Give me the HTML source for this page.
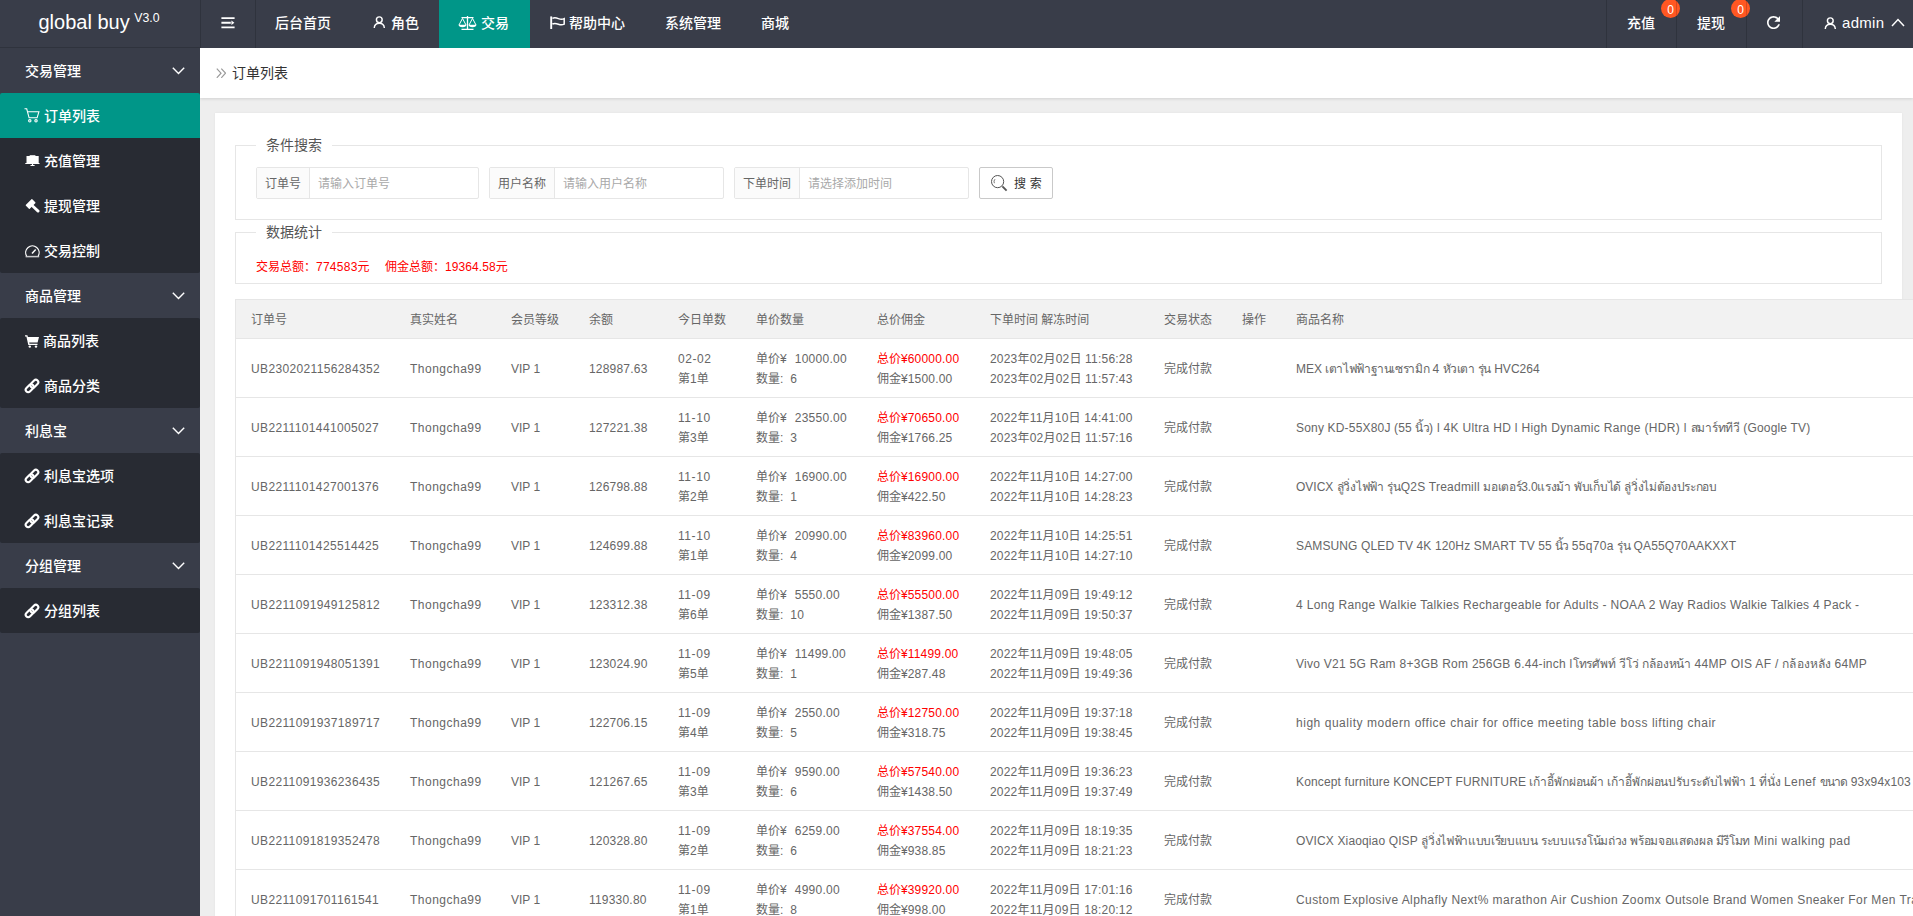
<!DOCTYPE html>
<html lang="zh-CN">
<head>
<meta charset="utf-8">
<title>global buy</title>
<style>
*{box-sizing:border-box;margin:0;padding:0}
html,body{width:1913px;height:916px;overflow:hidden}
body{font-family:"Liberation Sans","Noto Sans CJK SC",sans-serif;font-size:14px;color:#333;background:#eee;position:relative}
svg{display:block}
/* header */
.hd{position:absolute;left:0;top:0;width:1913px;height:48px;background:#393d49;color:#fff;font-weight:500;z-index:3}
.logo{position:absolute;left:0;top:0;width:200px;height:48px;border-bottom:1px solid rgba(0,0,0,.16);line-height:44px;padding-right:2px;text-align:center;font-size:20px;color:#fff;letter-spacing:0}
.logo sup{font-size:12.3px;letter-spacing:0;font-weight:normal;position:relative;top:-7px;vertical-align:baseline;margin-left:-1px}
.nav{position:absolute;top:0;height:48px;line-height:46px;font-size:14px;color:#fff;white-space:nowrap}
.nav.on{background:#009688}
.nav .ic{position:absolute}
.vline{position:absolute;top:0;width:1px;height:48px;background:rgba(0,0,0,.16)}
.badge{position:absolute;top:-1px;width:19px;height:19px;border-radius:10px;background:#ff5722;color:#fff;font-size:12px;line-height:22px;text-align:center}
/* side */
.side{position:absolute;left:0;top:48px;width:200px;height:868px;background:#393d49;font-weight:500;z-index:2}
.si{position:absolute;left:0;width:200px;height:45px;line-height:47px;color:#fff;font-size:14px;white-space:nowrap}
.si.p{padding-left:25px;background:#393d49}
.si.c{background:#282b33}
.si.on{background:#009688}
.si .tx{position:absolute;left:44px;top:0}
.si .ic{position:absolute;left:25px}
.si .chev{position:absolute;left:172px;top:19px}
/* body */
.crumb{position:absolute;left:200px;top:48px;width:1713px;height:50px;background:#fff;box-shadow:0 1px 3px rgba(0,0,0,.12);line-height:50px;font-size:14px;color:#333}
.crumb .tx{position:absolute;left:32px;top:0}
.card{position:absolute;left:215px;top:113px;width:1687px;height:820px;background:#fff;box-shadow:0 0 2px rgba(0,0,0,.06)}
.fs{position:absolute;border:1px solid #e6e6e6;left:235px;width:1647px}
.lg{position:absolute;left:20px;top:-11px;height:20px;line-height:20px;background:#fff;padding:0 10px;font-size:14px;color:#555}
.grp{position:absolute;top:167px;height:32px;border:1px solid #e6e6e6;border-radius:2px;background:#fff;font-size:12px;line-height:32px}
.grp .lb{position:absolute;left:0;top:0;height:30px;background:#fbfbfb;border-right:1px solid #e6e6e6;text-align:left;padding-left:8px;color:#666}
.grp .ph{position:absolute;top:0;color:#a9a9a9}
.btn{position:absolute;left:979px;top:167px;width:74px;height:32px;border:1px solid #c9c9c9;border-radius:2px;background:#fff;font-size:12px;line-height:32px;color:#333}
.stat{position:absolute;left:256px;top:257px;font-size:12px;line-height:20px;color:#f00;white-space:pre}
/* table */
table{position:absolute;left:235px;top:299px;border-collapse:separate;border-spacing:0;table-layout:fixed;width:1800px;background:#fff;font-size:12px;color:#666;line-height:20px;border-left:1px solid #e6e6e6;border-top:1px solid #e6e6e6}
th,td{padding:10px 15px 8px;text-align:left;font-weight:normal;border-bottom:1px solid #e6e6e6;white-space:nowrap;overflow:hidden;vertical-align:middle}
th{background:#f2f2f2;height:39px}
td{height:59px}
.red{color:#f00}
.sg{display:inline-block;white-space:pre;vertical-align:top}
.l1{letter-spacing:.36px}.l2{letter-spacing:.49px}.l3{letter-spacing:0}.l4{letter-spacing:.2px}.l5{letter-spacing:.57px}
.l6{letter-spacing:.27px;margin-left:8px}.l7{letter-spacing:.27px;margin-left:7px}.l8{letter-spacing:.2px}.l9{letter-spacing:.2px}
</style>
</head>
<body>
<!-- ================= header ================= -->
<div class="hd">
  <div class="logo">global buy <sup>V3.0</sup></div>
  <div class="vline" style="left:200px"></div>
  <div class="vline" style="left:255px"></div>
  <div class="nav" style="left:200px;width:55px">
    <svg class="ic" style="left:21px;top:16px" width="14" height="14" viewBox="0 0 14 14" fill="#fff"><path d="M0.4 1.2h13.2v1.9H0.4zM0.4 5.8h9.400v1.900H0.4zM0.4 10.4h13.2v1.900H0.4zM10.400 4.500l3 2.250-3 2.250z"/></svg>
  </div>
  <div class="nav" style="left:275px">后台首页</div>
  <div class="nav" style="left:352px;width:87px">
    <svg class="ic" style="left:21px;top:16.300px" width="12.600" height="12.600" viewBox="0 0 14 14" fill="none" stroke="#fff" stroke-width="1.600"><circle cx="7" cy="4.200" r="3.200"/><path d="M1.4 13.4c.2-3.6 2.6-5.4 5.6-5.4s5.4 1.8 5.6 5.4"/></svg>
    <span style="position:absolute;left:39px">角色</span>
  </div>
  <div class="nav on" style="left:439px;width:91px">
    <svg class="ic" style="left:19px;top:16px" width="19" height="15" viewBox="0 0 19 15" fill="none" stroke="#fff" stroke-width="1.2"><path d="M9.5 0v13M3.5 13.4h12M3.5 1.6h12" stroke-width="1.3"/><path d="M1 9l3.5-6.6L8 9M11 9l3.5-6.6L18 9" stroke-width="1"/><path d="M0.6 8.8h7.8a3.9 2.4 0 0 1-7.8 0zM10.6 8.8h7.8a3.9 2.4 0 0 1-7.8 0z" fill="#fff" stroke="none"/></svg>
    <span style="position:absolute;left:42px">交易</span>
  </div>
  <div class="nav" style="left:530px;width:115px">
    <svg class="ic" style="left:20px;top:16px" width="16" height="14" viewBox="0 0 16 14" fill="none" stroke="#fff" stroke-width="1.5"><path d="M1.2 0.4v12.6" stroke-width="1.9"/><path d="M2.4 2.4c2.2-1.2 4 -0.6 6 0.2s3.800 1 5.800 0v5.600c-2 1-3.800 0.800-5.800 0s-3.800-1.400-6-0.200"/></svg>
    <span style="position:absolute;left:39px">帮助中心</span>
  </div>
  <div class="nav" style="left:665px">系统管理</div>
  <div class="nav" style="left:761px">商城</div>

  <div class="nav" style="left:1627px">充值</div>
  <div class="badge" style="left:1661px">0</div>
  <div class="nav" style="left:1697px">提现</div>
  <div class="badge" style="left:1731px">0</div>
  <div class="vline" style="left:1606px"></div>
  <div class="vline" style="left:1676px"></div>
  <div class="vline" style="left:1746px"></div>
  <div class="vline" style="left:1802px"></div>
  <div class="nav" style="left:1746px;width:56px">
    <svg class="ic" style="left:21.2px;top:16.1px" width="13.1" height="13.1" viewBox="4 4 16 16" fill="#fff"><path d="M17.65 6.35C16.2 4.900 14.210 4 12 4c-4.420 0-7.990 3.580-7.990 8s3.570 8 7.990 8c3.730 0 6.840-2.550 7.730-6h-2.080c-.820 2.330-3.040 4-5.650 4-3.310 0-6-2.690-6-6s2.690-6 6-6c1.660 0 3.140.690 4.220 1.780L13 11h7V4l-2.350 2.350z"/></svg>
  </div>
  <div class="nav" style="left:1802px;width:111px">
    <svg class="ic" style="left:21.500px;top:16.600px" width="12.600" height="12.600" viewBox="0 0 14 14" fill="none" stroke="#fff" stroke-width="1.6"><circle cx="7" cy="4.2" r="3.2"/><path d="M1.4 13.4c.2-3.6 2.6-5.4 5.6-5.4s5.4 1.8 5.6 5.4"/></svg>
    <span style="position:absolute;left:40px;font-size:15px;letter-spacing:.3px">admin</span>
    <svg class="ic" style="left:89px;top:18px" width="14" height="9" viewBox="0 0 14 9" fill="none" stroke="#fff" stroke-width="1.5"><path d="M1 8l6-6.4L13 8"/></svg>
  </div>
</div>

<!-- ================= sidebar ================= -->
<div class="side">
  <div class="si p" style="top:0">交易管理<svg class="chev" width="13" height="8" viewBox="0 0 13 8" fill="none" stroke="#fff" stroke-width="1.4"><path d="M0.8 0.8l5.7 5.8 5.7-5.8"/></svg></div>
  <div class="si c on" style="top:45px;border-radius:2px 2px 0 0">
    <svg class="ic" style="top:15px;left:24px" width="16" height="15" viewBox="0 0 16 15" fill="none" stroke="#fff" stroke-width="1.1"><path d="M0.5 0.8h2.2l2.4 9h8l1.8-6H4"/><circle cx="5.8" cy="12.8" r="1.2"/><circle cx="12" cy="12.8" r="1.2"/></svg>
    <span class="tx">订单列表</span></div>
  <div class="si c" style="top:90px">
    <svg class="ic" style="left:24.5px;top:17px" width="15" height="12" viewBox="0 0 15 12" fill="#fff"><path d="M4.700 0h5.700v1H4.700z" opacity=".8"/><path d="M1.500 0.900h12.200v7.700H1.500zM0.300 8h14.200v.900H0.300zM6.900 8.900h1.200v1.100H6.900zM5.500 10h4.100v1.100H5.500z"/></svg>
    <span class="tx">充值管理</span></div>
  <div class="si c" style="top:135px">
    <svg class="ic" style="left:24.700px;top:16.100px" width="15" height="15" viewBox="0 0 15 15" fill="#fff"><g transform="rotate(-45 5.600 5)"><rect x="1.100" y="2.300" width="9" height="5.400" rx=".600"/></g><path d="M7.400 6.800l5.700 5.300" fill="none" stroke="#fff" stroke-width="2.800" stroke-linecap="round"/></svg>
    <span class="tx">提现管理</span></div>
  <div class="si c" style="top:180px;border-radius:0 0 2px 2px">
    <svg class="ic" style="left:24.900px;top:16.700px" width="15" height="13" viewBox="0 0 15 13" fill="none" stroke="#fff" stroke-width="1.200"><path d="M0.600 11.600h13.600" stroke-width="1.500" opacity=".75"/><path d="M1.630 11A6.700 6.700 0 1 1 13.170 11"/><path d="M7 8.400l3.700-4" stroke-width="1.500"/></svg>
    <span class="tx">交易控制</span></div>
  <div class="si p" style="top:225px">商品管理<svg class="chev" width="13" height="8" viewBox="0 0 13 8" fill="none" stroke="#fff" stroke-width="1.4"><path d="M0.8 0.8l5.7 5.8 5.7-5.8"/></svg></div>
  <div class="si c" style="top:270px;border-radius:2px 2px 0 0">
    <svg class="ic" style="top:17px" width="14" height="13" viewBox="0 0 14 13" fill="#fff"><path d="M0 0.3h2.4l0.5 1.7H14l-1.4 5.4H4.2l0.3 1.3h8v1.3H3.3L1.4 1.6H0z"/><circle cx="4.8" cy="11.6" r="1.2"/><circle cx="11" cy="11.6" r="1.2"/></svg>
    <span class="tx" style="left:43px">商品列表</span></div>
  <div class="si c" style="top:315px;border-radius:0 0 2px 2px">
    <svg class="ic lk" style="left:24px;top:15px" width="16" height="16" viewBox="0 0 16 16" fill="none" stroke="#fff" stroke-width="2.1"><g transform="rotate(-45 8 8)"><rect x="0.150" y="5.550" width="9.100" height="4.900" rx="2.450"/><rect x="6.750" y="5.550" width="9.100" height="4.900" rx="2.450"/></g></svg>
    <span class="tx">商品分类</span></div>
  <div class="si p" style="top:360px">利息宝<svg class="chev" width="13" height="8" viewBox="0 0 13 8" fill="none" stroke="#fff" stroke-width="1.4"><path d="M0.8 0.8l5.7 5.8 5.7-5.8"/></svg></div>
  <div class="si c" style="top:405px;border-radius:2px 2px 0 0">
    <svg class="ic lk" style="left:24px;top:15px" width="16" height="16" viewBox="0 0 16 16" fill="none" stroke="#fff" stroke-width="2.1"><g transform="rotate(-45 8 8)"><rect x="0.150" y="5.550" width="9.100" height="4.900" rx="2.450"/><rect x="6.750" y="5.550" width="9.100" height="4.900" rx="2.450"/></g></svg>
    <span class="tx">利息宝选项</span></div>
  <div class="si c" style="top:450px;border-radius:0 0 2px 2px">
    <svg class="ic lk" style="left:24px;top:15px" width="16" height="16" viewBox="0 0 16 16" fill="none" stroke="#fff" stroke-width="2.1"><g transform="rotate(-45 8 8)"><rect x="0.150" y="5.550" width="9.100" height="4.900" rx="2.450"/><rect x="6.750" y="5.550" width="9.100" height="4.900" rx="2.450"/></g></svg>
    <span class="tx">利息宝记录</span></div>
  <div class="si p" style="top:495px">分组管理<svg class="chev" width="13" height="8" viewBox="0 0 13 8" fill="none" stroke="#fff" stroke-width="1.4"><path d="M0.8 0.8l5.7 5.8 5.7-5.8"/></svg></div>
  <div class="si c" style="top:540px;border-radius:2px">
    <svg class="ic lk" style="left:24px;top:15px" width="16" height="16" viewBox="0 0 16 16" fill="none" stroke="#fff" stroke-width="2.1"><g transform="rotate(-45 8 8)"><rect x="0.150" y="5.550" width="9.100" height="4.900" rx="2.450"/><rect x="6.750" y="5.550" width="9.100" height="4.900" rx="2.450"/></g></svg>
    <span class="tx">分组列表</span></div>
</div>

<!-- ================= content ================= -->
<div class="crumb">
  <svg style="position:absolute;left:16px;top:20px" width="10" height="10" viewBox="0 0 10 10" fill="none" stroke="#999" stroke-width="1.2"><path d="M0.8 0.6l4.2 4.6-4.2 4.600M5.300 0.600l4.200 4.600-4.200 4.600"/></svg>
  <span class="tx">订单列表</span>
</div>
<div class="card"></div>

<div class="fs" style="top:145px;height:75px"><div class="lg">条件搜索</div></div>
<div class="grp" style="left:256px;width:223px"><div class="lb" style="width:53px">订单号</div><div class="ph" style="left:61px">请输入订单号</div></div>
<div class="grp" style="left:489px;width:235px"><div class="lb" style="width:65px">用户名称</div><div class="ph" style="left:73px">请输入用户名称</div></div>
<div class="grp" style="left:734px;width:235px"><div class="lb" style="width:65px">下单时间</div><div class="ph" style="left:73px">请选择添加时间</div></div>
<div class="btn">
  <svg style="position:absolute;left:11px;top:7px" width="17" height="17" viewBox="0 0 17 17" fill="none" stroke="#555" stroke-width="1"><circle cx="6.6" cy="6.6" r="6.1"/><path d="M3.400 8.200a3.400 3.400 0 0 1 0.600-4" stroke-width=".8"/><path d="M11.400 11.400l4.200 4.200" stroke-width="1.900"/></svg>
  <span style="position:absolute;left:34px;top:0;letter-spacing:3.8px">搜索</span>
</div>

<div class="fs" style="top:232px;height:52px"><div class="lg">数据统计</div></div>
<div class="stat">交易总额：<span style="letter-spacing:.25px">774583</span>元</div><div class="stat" style="left:385px">佣金总额：<span style="letter-spacing:.08px">19364.58</span>元</div>

<table>
<colgroup><col style="width:159px"><col style="width:101px"><col style="width:78px"><col style="width:89px"><col style="width:78px"><col style="width:121px"><col style="width:113px"><col style="width:174px"><col style="width:78px"><col style="width:54px"><col></colgroup>
<thead><tr><th>订单号</th><th>真实姓名</th><th>会员等级</th><th>余额</th><th>今日单数</th><th>单价数量</th><th>总价佣金</th><th>下单时间 解冻时间</th><th>交易状态</th><th>操作</th><th>商品名称</th></tr></thead>
<tbody>
<tr><td class="l1">UB2302021156284352</td><td class="l2">Thongcha99</td><td class="l3">VIP 1</td><td class="l4">128987.63</td><td><span class="l5">02-02</span><br>第1单</td><td>单价¥<span class="l6">10000.00</span><br>数量:<span class="l7">6</span></td><td><span class="red">总价¥<span class="l8">60000.00</span></span><br>佣金¥<span class="l8">1500.00</span></td><td class="l9">2023年02月02日 11:56:28<br>2023年02月02日 11:57:43</td><td>完成付款</td><td></td><td class="nm"><span class="sg" style="width:29.2px;letter-spacing:-0.04px">MEX </span><span class="sg" style="width:107.4px;letter-spacing:-0.37px;word-spacing:0.37px">เตาไฟฟ้าฐานเซรามิก </span><span class="sg" style="width:10.4px;letter-spacing:0.19px">4 </span><span class="sg" style="width:51.2px;letter-spacing:-0.50px;word-spacing:0.50px">หัวเตา รุ่น </span><span class="sg" style="width:45.6px;letter-spacing:0.04px">HVC264</span></td></tr>
<tr><td class="l1">UB2211101441005027</td><td class="l2">Thongcha99</td><td class="l3">VIP 1</td><td class="l4">127221.38</td><td><span class="l5">11-10</span><br>第3单</td><td>单价¥<span class="l6">23550.00</span><br>数量:<span class="l7">3</span></td><td><span class="red">总价¥<span class="l8">70650.00</span></span><br>佣金¥<span class="l8">1766.25</span></td><td class="l9">2022年11月10日 14:41:00<br>2023年02月02日 11:57:16</td><td>完成付款</td><td></td><td class="nm"><span class="sg" style="width:119.4px;letter-spacing:0.18px">Sony KD-55X80J (55 </span><span class="sg" style="width:13.5px;letter-spacing:-0.75px">นิ้ว</span><span class="sg" style="width:261.7px;letter-spacing:0.33px">) l 4K Ultra HD l High Dynamic Range (HDR) l </span><span class="sg" style="width:52.7px;letter-spacing:-0.23px;word-spacing:0.23px">สมาร์ททีวี </span><span class="sg" style="width:67.1px;letter-spacing:0.18px">(Google TV)</span></td></tr>
<tr><td class="l1">UB2211101427001376</td><td class="l2">Thongcha99</td><td class="l3">VIP 1</td><td class="l4">126798.88</td><td><span class="l5">11-10</span><br>第2单</td><td>单价¥<span class="l6">16900.00</span><br>数量:<span class="l7">1</span></td><td><span class="red">总价¥<span class="l8">16900.00</span></span><br>佣金¥<span class="l8">422.50</span></td><td class="l9">2022年11月10日 14:27:00<br>2022年11月10日 14:28:23</td><td>完成付款</td><td></td><td class="nm"><span class="sg" style="width:40.6px;letter-spacing:-0.01px">OVICX </span><span class="sg" style="width:64.1px;letter-spacing:-0.25px;word-spacing:0.25px">ลู่วิ่งไฟฟ้า รุ่น</span><span class="sg" style="width:82.7px;letter-spacing:0.24px">Q2S Treadmill </span><span class="sg" style="width:37.8px;letter-spacing:-0.37px">มอเตอร์</span><span class="sg" style="width:16.3px;letter-spacing:-0.13px">3.0</span><span class="sg" style="width:179.1px;letter-spacing:-0.33px;word-spacing:0.33px">แรงม้า พับเก็บได้ ลู่วิ่งไม่ต้องประกอบ</span></td></tr>
<tr><td class="l1">UB2211101425514425</td><td class="l2">Thongcha99</td><td class="l3">VIP 1</td><td class="l4">124699.88</td><td><span class="l5">11-10</span><br>第1单</td><td>单价¥<span class="l6">20990.00</span><br>数量:<span class="l7">4</span></td><td><span class="red">总价¥<span class="l8">83960.00</span></span><br>佣金¥<span class="l8">2099.00</span></td><td class="l9">2022年11月10日 14:25:51<br>2022年11月10日 14:27:10</td><td>完成付款</td><td></td><td class="nm"><span class="sg" style="width:259.4px;letter-spacing:0.13px">SAMSUNG QLED TV 4K 120Hz SMART TV 55 </span><span class="sg" style="width:16.3px;letter-spacing:-1.02px;word-spacing:1.02px">นิ้ว </span><span class="sg" style="width:45.6px;letter-spacing:0.32px">55q70a </span><span class="sg" style="width:16.3px;letter-spacing:-0.52px;word-spacing:0.52px">รุ่น </span><span class="sg" style="width:102.6px;letter-spacing:0.14px">QA55Q70AAKXXT</span></td></tr>
<tr><td class="l1">UB2211091949125812</td><td class="l2">Thongcha99</td><td class="l3">VIP 1</td><td class="l4">123312.38</td><td><span class="l5">11-09</span><br>第6单</td><td>单价¥<span class="l6">5550.00</span><br>数量:<span class="l7">10</span></td><td><span class="red">总价¥<span class="l8">55500.00</span></span><br>佣金¥<span class="l8">1387.50</span></td><td class="l9">2022年11月09日 19:49:12<br>2022年11月09日 19:50:37</td><td>完成付款</td><td></td><td class="nm"><span class="sg" style="width:306.6px;letter-spacing:0.34px">4 Long Range Walkie Talkies Rechargeable for Adults </span><span class="sg" style="width:256.7px;letter-spacing:0.29px">- NOAA 2 Way Radios Walkie Talkies 4 Pack -</span></td></tr>
<tr><td class="l1">UB2211091948051391</td><td class="l2">Thongcha99</td><td class="l3">VIP 1</td><td class="l4">123024.90</td><td><span class="l5">11-09</span><br>第5单</td><td>单价¥<span class="l6">11499.00</span><br>数量:<span class="l7">1</span></td><td><span class="red">总价¥<span class="l8">11499.00</span></span><br>佣金¥<span class="l8">287.48</span></td><td class="l9">2022年11月09日 19:48:05<br>2022年11月09日 19:49:36</td><td>完成付款</td><td></td><td class="nm"><span class="sg" style="width:276.7px;letter-spacing:0.27px">Vivo V21 5G Ram 8+3GB Rom 256GB 6.44-inch l</span><span class="sg" style="width:121.8px;letter-spacing:-0.14px;word-spacing:0.14px">โทรศัพท์ วีโว่ กล้องหน้า </span><span class="sg" style="width:87.9px;letter-spacing:0.34px">44MP OIS AF / </span><span class="sg" style="width:52.1px;letter-spacing:0.09px">กล้องหลัง </span><span class="sg" style="width:32.6px;letter-spacing:0.31px">64MP</span></td></tr>
<tr><td class="l1">UB2211091937189717</td><td class="l2">Thongcha99</td><td class="l3">VIP 1</td><td class="l4">122706.15</td><td><span class="l5">11-09</span><br>第4单</td><td>单价¥<span class="l6">2550.00</span><br>数量:<span class="l7">5</span></td><td><span class="red">总价¥<span class="l8">12750.00</span></span><br>佣金¥<span class="l8">318.75</span></td><td class="l9">2022年11月09日 19:37:18<br>2022年11月09日 19:38:45</td><td>完成付款</td><td></td><td class="nm"><span class="sg" style="width:186.8px;letter-spacing:0.53px">high quality modern office chair </span><span class="sg" style="width:233.2px;letter-spacing:0.53px">for office meeting table boss lifting chair</span></td></tr>
<tr><td class="l1">UB2211091936236435</td><td class="l2">Thongcha99</td><td class="l3">VIP 1</td><td class="l4">121267.65</td><td><span class="l5">11-09</span><br>第3单</td><td>单价¥<span class="l6">9590.00</span><br>数量:<span class="l7">6</span></td><td><span class="red">总价¥<span class="l8">57540.00</span></span><br>佣金¥<span class="l8">1438.50</span></td><td class="l9">2022年11月09日 19:36:23<br>2022年11月09日 19:37:49</td><td>完成付款</td><td></td><td class="nm"><span class="sg" style="width:233.4px;letter-spacing:0.14px">Koncept furniture KONCEPT FURNITURE </span><span class="sg" style="width:219.8px;letter-spacing:-0.12px;word-spacing:0.12px">เก้าอี้พักผ่อนผ้า เก้าอี้พักผ่อนปรับระดับไฟฟ้า </span><span class="sg" style="width:9.8px;letter-spacing:-0.11px">1 </span><span class="sg" style="width:25.0px;letter-spacing:-0.11px;word-spacing:0.11px">ที่นั่ง </span><span class="sg" style="width:35.9px;letter-spacing:0.42px">Lenef </span><span class="sg" style="width:30.9px;letter-spacing:-0.86px;word-spacing:0.86px">ขนาด </span><span class="sg" style="width:60.2px;letter-spacing:0.16px">93x94x103</span><span class="sg" style="letter-spacing:.4px"> ซม.</span></td></tr>
<tr><td class="l1">UB2211091819352478</td><td class="l2">Thongcha99</td><td class="l3">VIP 1</td><td class="l4">120328.80</td><td><span class="l5">11-09</span><br>第2单</td><td>单价¥<span class="l6">6259.00</span><br>数量:<span class="l7">6</span></td><td><span class="red">总价¥<span class="l8">37554.00</span></span><br>佣金¥<span class="l8">938.85</span></td><td class="l9">2022年11月09日 18:19:35<br>2022年11月09日 18:21:23</td><td>完成付款</td><td></td><td class="nm"><span class="sg" style="width:125.2px;letter-spacing:0.13px">OVICX Xiaoqiao QISP </span><span class="sg" style="width:332.5px;letter-spacing:-0.32px;word-spacing:0.32px">ลู่วิ่งไฟฟ้าแบบเรียบแบน ระบบแรงโน้มถ่วง พร้อมจอแสดงผล มีรีโมท </span><span class="sg" style="width:97.1px;letter-spacing:0.52px">Mini walking pad</span></td></tr>
<tr><td class="l1">UB2211091701161541</td><td class="l2">Thongcha99</td><td class="l3">VIP 1</td><td class="l4">119330.80</td><td><span class="l5">11-09</span><br>第1单</td><td>单价¥<span class="l6">4990.00</span><br>数量:<span class="l7">8</span></td><td><span class="red">总价¥<span class="l8">39920.00</span></span><br>佣金¥<span class="l8">998.00</span></td><td class="l9">2022年11月09日 17:01:16<br>2022年11月09日 18:20:12</td><td>完成付款</td><td></td><td class="nm"><span class="sg" style="width:196.6px;letter-spacing:0.41px">Custom Explosive Alphafly Next% </span><span class="sg" style="width:172.6px;letter-spacing:0.51px">marathon Air Cushion Zoomx </span><span class="sg" style="width:206.1px;letter-spacing:0.38px">Outsole Brand Women Sneaker For </span><span class="sg" style="width:28.3px;letter-spacing:0.40px">Men </span><span class="sg" style="letter-spacing:.4px">Trainers Running Shoes</span></td></tr>
</tbody>
</table>
</body>
</html>
